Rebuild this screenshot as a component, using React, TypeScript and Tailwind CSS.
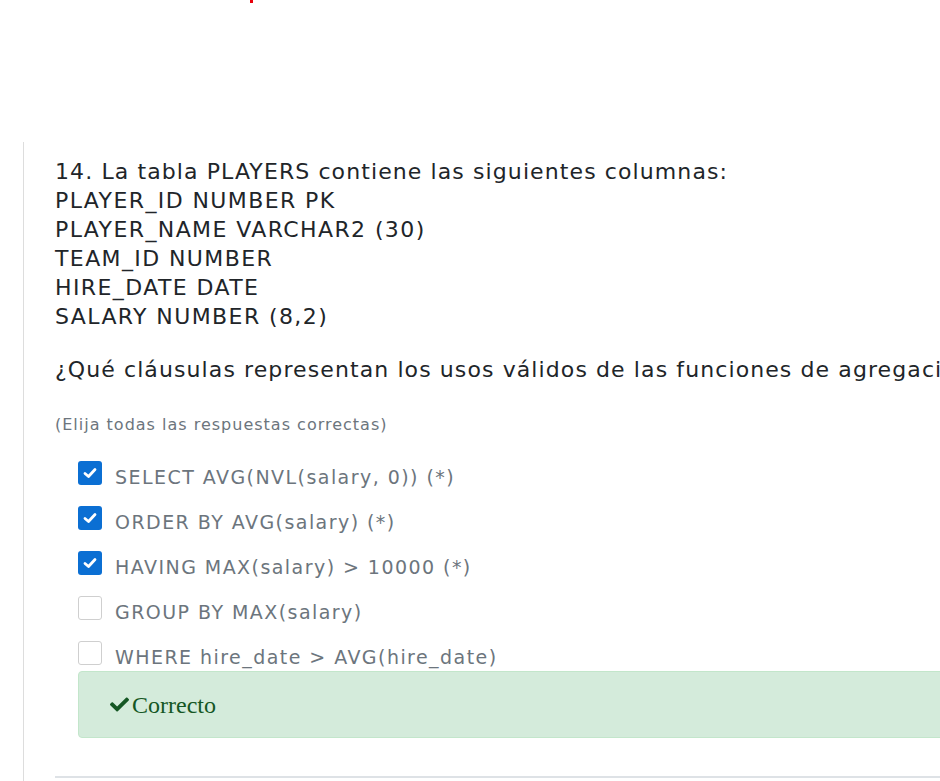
import React from "react";
import { FaCheck } from "react-icons/fa";

const options = [
  { text: "SELECT AVG(NVL(salary, 0)) (*)", checked: true },
  { text: "ORDER BY AVG(salary) (*)", checked: true },
  { text: "HAVING MAX(salary) > 10000 (*)", checked: true },
  { text: "GROUP BY MAX(salary)", checked: false },
  { text: "WHERE hire_date > AVG(hire_date)", checked: false },
];

const columns = [
  "PLAYER_ID NUMBER PK",
  "PLAYER_NAME VARCHAR2 (30)",
  "TEAM_ID NUMBER",
  "HIRE_DATE DATE",
  "SALARY NUMBER (8,2)",
];

const Box = ({ checked }: { checked: boolean }) =>
  checked ? (
    <div className="w-[24px] h-[24px] shrink-0 rounded-[3px] bg-[#0b6fd3] flex items-center justify-center">
      <svg width="14" height="12" viewBox="0 0 14 12">
        <path d="M2 6.5 L5.5 9.5 L12 2.5" fill="none" stroke="white" strokeWidth="2.8" strokeLinecap="round" strokeLinejoin="round" />
      </svg>
    </div>
  ) : (
    <div className="w-[24px] h-[24px] shrink-0 rounded-[3px] bg-white border border-[#cfcfcf]" />
  );

const App = () => {
  return (
    <div className="w-[940px] h-[781px] overflow-hidden bg-white" style={{ fontFamily: '"DejaVu Sans", Verdana, sans-serif' }}>
      {/* top gap with red mark */}
      <div className="h-[142px]">
        <div className="ml-[250px] w-[3px] h-[3px] bg-[#e8000b]" />
      </div>

      <div className="ml-[23px] border-l border-[#dddddd] w-[1200px] h-[700px] pl-[31px] pt-[15px]">
        {/* Question start */}
        <div className="text-[22px] leading-[29px] tracking-[1.1px] text-[#212529]">
          <div>14. La tabla PLAYERS contiene las siguientes columnas:</div>
          {columns.map((c) => (
            <div key={c} className="tracking-[1.4px]">{c}</div>
          ))}
        </div>
        <div className="mt-[24px] text-[22px] leading-[29px] tracking-[1.1px] text-[#212529] whitespace-nowrap">
          ¿Qué cláusulas representan los usos válidos de las funciones de agregación?
        </div>
        <div className="mt-[29px] text-[16px] leading-[24px] tracking-[1px] text-[#6c757d]">
          (Elija todas las respuestas correctas)
        </div>
        {/* Question end */}

        {/* Options start */}
        <div className="mt-[24px] pl-[23px]">
          <div>
            {options.map((o) => (
              <div key={o.text} className="flex items-start h-[45px] last:h-[24px]">
                <Box checked={o.checked} />
                <div className="ml-[13px] mt-[4px] text-[19px] leading-[24px] tracking-[1.45px] text-[#6c757d] whitespace-nowrap">
                  {o.text}
                </div>
              </div>
            ))}
          </div>
          <div className="mt-[6px] w-[1000px] h-[67px] bg-[#d4ebdb] border border-[#c3e6cb] rounded-[4px] flex items-center pl-[31px]">
            <FaCheck className="text-[#155724] w-[19px] h-[19px]" />
            <span className="ml-[3px] text-[24px] leading-[28px] text-[#155724]" style={{ fontFamily: '"Liberation Serif", serif' }}>
              Correcto
            </span>
          </div>
        </div>
        {/* Options end */}

        <div className="mt-[38px] h-[2px] bg-[#dee2e6] w-[1100px]" />
      </div>
    </div>
  );
};

export default App;
